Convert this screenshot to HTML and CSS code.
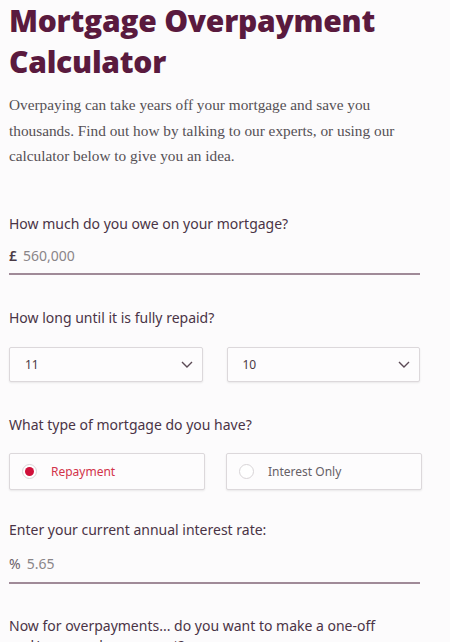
FILE: index.html
```html
<!DOCTYPE html>
<html>
<head>
<meta charset="utf-8">
<link rel="stylesheet" href="styles.css">
</head>
<body>
<main class="calc">
  <h1 class="title">Mortgage Overpayment Calculator</h1>
  <p class="intro">Overpaying can take years off your mortgage and save you thousands. Find out how by talking to our experts, or using our calculator below to give you an idea.</p>

  <section class="field field-owe">
    <label class="label">How much do you owe on your mortgage?</label>
    <div class="line-input"><span class="prefix">£</span><span class="value">560,000</span></div>
  </section>

  <section class="field field-term">
    <label class="label">How long until it is fully repaid?</label>
    <div class="selects">
      <div class="select"><span>11</span><svg class="chev" width="12" height="7" viewBox="0 0 12 7"><path d="M1 1l5 5 5-5" fill="none" stroke="#5b4a55" stroke-width="1.4"/></svg></div>
      <div class="select"><span>10</span><svg class="chev" width="12" height="7" viewBox="0 0 12 7"><path d="M1 1l5 5 5-5" fill="none" stroke="#5b4a55" stroke-width="1.4"/></svg></div>
    </div>
  </section>

  <section class="field field-type">
    <label class="label">What type of mortgage do you have?</label>
    <div class="radios">
      <div class="radio active"><span class="dot"></span><span>Repayment</span></div>
      <div class="radio"><span class="dot"></span><span>Interest Only</span></div>
    </div>
  </section>

  <section class="field field-rate">
    <label class="label">Enter your current annual interest rate:</label>
    <div class="line-input rate"><span class="prefix pct">%</span><span class="value">5.65</span></div>
  </section>

  <section class="field field-over">
    <label class="label">Now for overpayments... do you want to make a one-off and/or a regular payment?</label>
  </section>
</main>
</body>
</html>
```
FILE: styles.css
```css
html, body {
  margin: 0;
  padding: 0;
  background: #fcfbfc;
}
body {
  overflow: hidden;
  height: 642px;
}
.calc {
  padding: 0 0 0 9px;
  width: 413px;
}
.title {
  margin: 0;
  padding-top: 0;
  font-family: "Open Sans", Lato, sans-serif;
  font-weight: 800;
  font-size: 30px;
  line-height: 41px;
  color: #5a1a3e;
  letter-spacing: -0.25px;
}
.intro {
  margin: 10px 0 0;
  font-family: "Liberation Serif", serif;
  font-size: 15.3px;
  line-height: 25.5px;
  color: #555055;
}
.label {
  display: block;
  font-family: "Noto Sans", Lato, sans-serif;
  font-size: 14px;
  line-height: 20px;
  color: #4a3446;
}
.field-owe { margin-top: 45px; }
.field-term { margin-top: 33px; }
.field-type { margin-top: 33px; }
.field-rate { margin-top: 30px; }
.field-over { margin-top: 32px; }
.line-input {
  width: 411px;
  box-sizing: content-box;
  padding: 12px 0 7px;
  height: 20px;
  line-height: 20px;
  border-bottom: 2px solid #a08a98;
  display: flex;
  align-items: center;
  gap: 6px;
  font-family: "Noto Sans", Lato, sans-serif;
  font-size: 14px;
}
.line-input.rate { padding: 14px 0 8px; }
.prefix { color: #4a3a45; font-weight: 600; }
.prefix.pct { font-weight: 400; color: #6a6068; }
.value { color: #8a8588; }
.selects {
  display: flex;
  gap: 24px;
  margin-top: 19px;
  width: 411px;
}
.select, .radio {
  flex: 1;
  box-sizing: border-box;
  border: 1px solid #dcd8db;
  border-radius: 2px;
  background: #fdfcfd;
  box-shadow: 0 1px 2px rgba(0,0,0,0.08);
  display: flex;
  align-items: center;
  font-family: "Noto Sans", Lato, sans-serif;
  font-size: 12px;
}
.select {
  height: 35px;
  padding: 0 9px 0 15px;
  justify-content: space-between;
  color: #4a3a45;
}
.radios {
  display: flex;
  gap: 21px;
  margin-top: 18px;
  width: 413px;
}
.radio {
  height: 37px;
  padding-left: 12px;
  gap: 14px;
  color: #666066;
}
.radio.active { color: #d2334a; }
.dot {
  width: 15px;
  height: 15px;
  box-sizing: border-box;
  border-radius: 50%;
  border: 1px solid #d8d4d7;
  background: #fff;
  display: flex;
  align-items: center;
  justify-content: center;
}
.radio.active .dot::after {
  content: "";
  width: 9px;
  height: 9px;
  border-radius: 50%;
  background: #d0103a;
}
.field-over .label { width: 412px; }
```
